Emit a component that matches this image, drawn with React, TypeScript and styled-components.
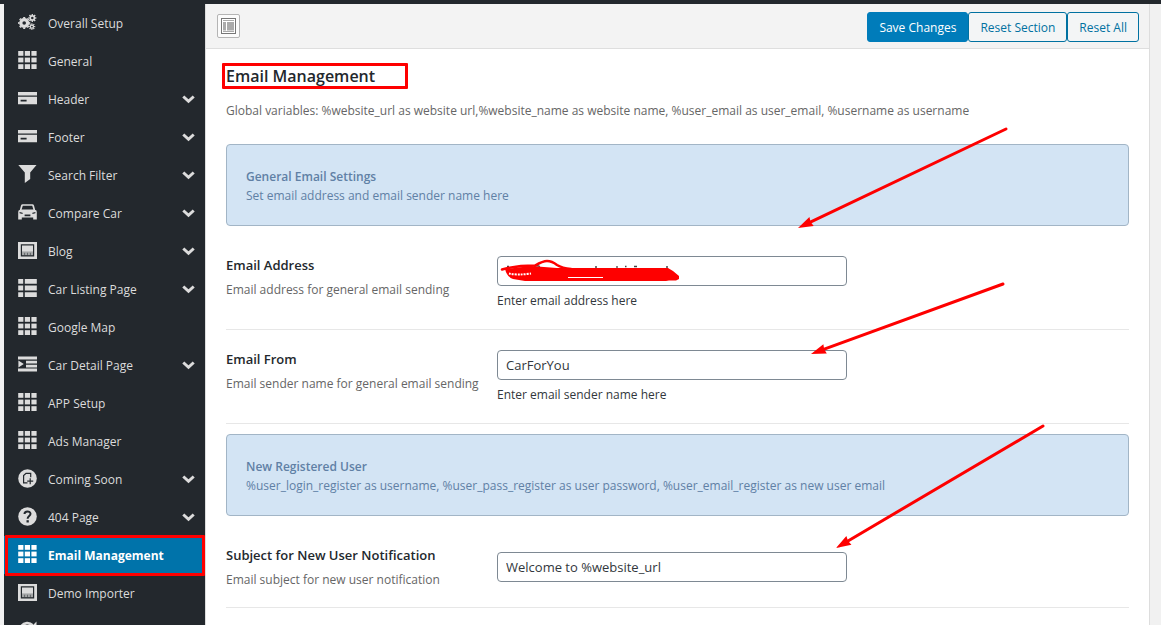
import React from "react";
import styled, { createGlobalStyle, css } from "styled-components";

const GlobalStyle = createGlobalStyle`
  *, *::before, *::after { box-sizing: border-box; }
  body {
    margin: 0;
    background: #f1f1f1;
    color: #32373c;
    font-family: "Open Sans", "Noto Sans", sans-serif;
    font-size: 12px;
    line-height: 18px;
  }
  h1, h2, h3, p, ul { margin: 0; padding: 0; }
  input, button { font: inherit; }
`;

const Page = styled.div`
  position: relative;
  display: flex;
  flex-direction: column;
  height: 100vh;
  overflow: hidden;
`;

const AdminBar = styled.div`
  flex: none;
  height: 4px;
  background: #23282d;
`;

const Frame = styled.div`
  flex: 1;
  min-height: 0;
  display: flex;
  padding: 0 11px 0 4px;
`;

const Sidebar = styled.nav`
  flex: none;
  width: 201px;
  background: #23282d;
`;

const MenuList = styled.ul`
  list-style: none;
`;

const MenuItem = styled.li`
  position: relative;
`;

const MenuLink = styled.a<{ $active?: boolean }>`
  display: flex;
  align-items: center;
  gap: 10px;
  height: 38px;
  padding: 0 10px 0 13px;
  color: #dcdcdc;
  text-decoration: none;
  ${({ $active }) =>
    $active &&
    css`
      background: #0073aa;
      color: #fff;
      font-weight: 700;
    `}
`;

const IconSlot = styled.span`
  flex: none;
  display: flex;
  justify-content: center;
  width: 20px;
  margin-right: 1px;
  padding-bottom: 2px;
`;

const MenuText = styled.span`
  flex: 1;
  padding-top: 2px;
`;

const Marker = styled.span`
  position: absolute;
  inset: -1px 0 -2px 1px;
  border: 3px solid #fe0000;
  border-radius: 1px;
  pointer-events: none;
`;

const Panel = styled.main`
  flex: 1;
  min-width: 0;
  background: #fff;
  border: solid #ddd;
  border-width: 0 1px;
`;

const Toolbar = styled.header`
  display: flex;
  align-items: center;
  justify-content: space-between;
  height: 45px;
  padding: 0 10px 0 11px;
  background: #f3f3f3;
  border-bottom: 1px solid #dedede;
`;

const ToggleButton = styled.button`
  display: flex;
  align-items: center;
  justify-content: center;
  width: 23px;
  height: 24px;
  padding: 0;
  background: #fbfbfb;
  border: 1px solid #b4b4b4;
  border-radius: 2px;
`;

const Actions = styled.div`
  display: flex;
  padding-top: 1px;
`;

const ActionButton = styled.button<{ $primary?: boolean }>`
  height: 30px;
  padding: 2px 11px 0;
  border: 1px solid ${({ $primary }) => ($primary ? "#007cba" : "#0071a1")};
  border-radius: 3px;
  background: ${({ $primary }) => ($primary ? "#007cba" : "#f3f5f6")};
  color: ${({ $primary }) => ($primary ? "#fff" : "#0071a1")};
`;

const Content = styled.div`
  padding: 14px 20px;
`;

const TitleFrame = styled.div`
  width: 186px;
  height: 26px;
  margin-left: -4px;
  padding-left: 1px;
  border: 3px solid #fe0000;
  border-radius: 1px;
`;

const Title = styled.h2`
  color: #23282d;
  font-size: 16px;
  font-weight: 600;
  line-height: 20px;
`;

const Intro = styled.p`
  padding: 13px 0 14px;
  color: #666;
`;

const Notice = styled.section`
  margin: 10px 0;
  padding: 22px 19px 20px;
  background: #d3e4f4;
  border: 1px solid #a2b5c6;
  border-radius: 4px;
  color: #6080a5;
  line-height: 19px;
`;

const NoticeTitle = styled.h3`
  font-size: 12px;
  font-weight: 600;
`;

const FieldRow = styled.div`
  display: grid;
  grid-template-columns: 271px minmax(0, 1fr);
  padding: 20px 0;
  border-bottom: 1px solid #e7e7e7;
`;

const FieldLabel = styled.label`
  display: block;
  margin-bottom: 7px;
  color: #23282d;
  font-size: 13px;
  font-weight: 600;
  line-height: 19px;
`;

const FieldNote = styled.p`
  color: #666;
  line-height: 15px;
`;

const FieldBody = styled.div`
  align-self: center;
`;

const InputWrap = styled.div`
  position: relative;
  max-width: 350px;
`;

const TextInput = styled.input`
  display: block;
  width: 100%;
  height: 30px;
  padding: 0 8px;
  background: #fff;
  border: 1px solid #7e8993;
  border-radius: 4px;
  color: #32373c;
  font-size: 13px;
`;

const Hint = styled.p`
  padding-top: 7px;
  line-height: 16px;
`;

const Scribble = styled.svg`
  position: absolute;
  top: 0;
  left: 0;
`;

const Arrows = styled.svg`
  position: absolute;
  top: 0;
  left: 0;
  pointer-events: none;
`;

type IconName =
  | "cogs" | "grid" | "card" | "filter" | "car" | "website"
  | "list" | "indent" | "soon" | "question" | "refresh";

const Svg = ({ h, children }: { h: number; children: React.ReactNode }) => (
  <svg width="19" height={h} viewBox={`0 0 19 ${h}`} fill="currentColor" aria-hidden="true">
    {children}
  </svg>
);

const Gear = ({ x, y, r, width }: { x: number; y: number; r: number; width: number }) => (
  <g transform={`translate(${x} ${y})`} fill="none" stroke="currentColor">
    <circle r={r} strokeWidth={width} />
    <circle
      r={r + width / 2 + 0.4}
      strokeWidth="1.4"
      pathLength="16"
      strokeDasharray="1 1"
      strokeDashoffset=".5"
    />
  </g>
);

const MenuIcon = ({ name }: { name: IconName }) => {
  switch (name) {
    case "cogs":
      return (
        <Svg h={16}>
          <Gear x={6.200} y={9} r={3.400} width={3.200} />
          <Gear x={14.300} y={4} r={2.100} width={1.700} />
          <Gear x={13.900} y={12.600} r={1.600} width={1.300} />
        </Svg>
      );
    case "grid":
      return (
        <Svg h={18}>
          {[0, 6.6, 13.2].map((y) =>
            [0.2, 6.8, 13.4].map((x) => <rect key={`${x}-${y}`} x={x} y={y} width="5.2" height="4.8" />)
          )}
        </Svg>
      );
    case "card":
      return (
        <Svg h={14}>
          <path fillRule="evenodd" d="M0 1h19v3.600H0zM0 5.700h19v7.600H0zM2.600 8.700v1.800h6V8.700z" />
        </Svg>
      );
    case "filter":
      return (
        <Svg h={18}>
          <path d="M.3 0h18.200l-6.300 7.600V14l-5.400 4V7.600z" />
        </Svg>
      );
    case "car":
      return (
        <Svg h={16}>
          <path
            fillRule="evenodd"
            d="M4.600.3h9.800c.8 0 1.300.4 1.600 1.200l1.200 4.500 1 .2c.4.500.6 1.200.6 2V15.500h-3.600V13.400H3.800v2.100H.2V8.200c0-.8.200-1.500.6-2l1-.2L3 1.500C3.300.700 3.800.3 4.600.3zM4.800 1.700L3.600 5.600h11.800l-1.200-3.900zM1.600 8v1.200l3 .7V8.700zM17.400 8l-3 .7v1.200l3-.7zM6.600 10.600v1.700h5.800v-1.700z"
          />
        </Svg>
      );
    case "website":
      return (
        <Svg h={17}>
          <path fillRule="evenodd" d="M0 0h19v17H0zM2.800 2.300v12.200h13.400V2.300z" />
          <path d="M4 3.500h11v6.300H4z" />
          <path
            d="M4 9.800h11v3.400H4z"
            opacity=".7"
          />
          <path d="M6.600 10.800v2.400M9.500 10.800v2.400M12.400 10.800v2.400" stroke="#23282d" strokeWidth=".5" />
        </Svg>
      );
    case "list":
      return (
        <Svg h={18}>
          {[0, 6.6, 13.2].map((y) => (
            <path key={y} d={`M.2 ${y}h5v4.800h-5zM6.800 ${y}h12v4.800h-12z`} />
          ))}
        </Svg>
      );
    case "indent":
      return (
        <Svg h={16}>
          <path d="M0 .6h19v2.800H0zM8 4.800h11v2.700H8zM8 8.700h11v2.700H8zM0 12.600h19v2.800H0zM.4 4.600l5.400 3.500L.4 11.600z" />
        </Svg>
      );
    case "soon":
      return (
        <Svg h={19}>
          <circle cx="9.500" cy="9.500" r="9.300" />
          <path
            d="M9.500 13.800H5.600V6.600l2.400-2.300h4.700v4M12.200 9.200v6M9.200 12.200h6"
            fill="none"
            stroke="#23282d"
            strokeWidth="1.200"
          />
        </Svg>
      );
    case "question":
      return (
        <Svg h={19}>
          <circle cx="9.500" cy="9.500" r="9.300" />
          <path
            d="M6.500 7c0-3.400 6-3.400 6-.2 0 2.200-2.900 2.200-2.900 5"
            fill="none"
            stroke="#23282d"
            strokeWidth="2"
          />
          <rect x="8.500" y="13.200" width="2.300" height="2.300" fill="#23282d" />
        </Svg>
      );
    case "refresh":
      return (
        <Svg h={19}>
          <path
            d="M16.200 12A7.300 7.300 0 1 1 14.500 4.300"
            fill="none"
            stroke="currentColor"
            strokeWidth="2.800"
          />
          <path d="M18.500.6v7.200h-7.200z" />
        </Svg>
      );
  }
};

const Chevron = () => (
  <svg width="13" height="9" viewBox="0 0 13 9" aria-hidden="true">
    <path d="M1.300 1.500L6.500 6.300l5.200-4.800" fill="none" stroke="currentColor" strokeWidth="3" />
  </svg>
);

const menu: { label: string; icon: IconName; expandable?: boolean; active?: boolean }[] = [
  { label: "Overall Setup", icon: "cogs" },
  { label: "General", icon: "grid" },
  { label: "Header", icon: "card", expandable: true },
  { label: "Footer", icon: "card", expandable: true },
  { label: "Search Filter", icon: "filter", expandable: true },
  { label: "Compare Car", icon: "car", expandable: true },
  { label: "Blog", icon: "website", expandable: true },
  { label: "Car Listing Page", icon: "list", expandable: true },
  { label: "Google Map", icon: "grid" },
  { label: "Car Detail Page", icon: "indent", expandable: true },
  { label: "APP Setup", icon: "grid" },
  { label: "Ads Manager", icon: "grid" },
  { label: "Coming Soon", icon: "soon", expandable: true },
  { label: "404 Page", icon: "question", expandable: true },
  { label: "Email Management", icon: "grid", active: true },
  { label: "Demo Importer", icon: "website" },
  { label: "", icon: "refresh" },
];

type FieldProps = {
  id: string;
  label: string;
  note: string;
  value: string;
  hint?: string;
  children?: React.ReactNode;
};

const Field = ({ id, label, note, value, hint, children }: FieldProps) => (
  <FieldRow>
    <div>
      <FieldLabel htmlFor={id}>{label}</FieldLabel>
      <FieldNote>{note}</FieldNote>
    </div>
    <FieldBody>
      <InputWrap>
        <TextInput id={id} type="text" defaultValue={value} />
        {children}
      </InputWrap>
      {hint && <Hint>{hint}</Hint>}
    </FieldBody>
  </FieldRow>
);

const Arrow = ({ from, to }: { from: [number, number]; to: [number, number] }) => {
  const angle = (Math.atan2(to[1] - from[1], to[0] - from[0]) * 180) / Math.PI;
  const length = Math.hypot(to[0] - from[0], to[1] - from[1]);
  return (
    <g transform={`translate(${from[0]} ${from[1]}) rotate(${angle})`} fill="#fe0000">
      <path d={`M0 0H${length - 9}`} stroke="#fe0000" strokeWidth="3" strokeLinecap="round" />
      <path d={`M${length} 0l-15 -5l1 5l-1 5z`} />
    </g>
  );
};

export default function App() {
  return (
    <Page>
      <GlobalStyle />
      <AdminBar />
      <Frame>
        <Sidebar aria-label="Theme options">
          <MenuList>
            {menu.map((item) => (
              <MenuItem key={item.label}>
                <MenuLink href="#" $active={item.active}>
                  <IconSlot>
                    <MenuIcon name={item.icon} />
                  </IconSlot>
                  <MenuText>{item.label}</MenuText>
                  {item.expandable && <Chevron />}
                </MenuLink>
                {item.active && <Marker />}
              </MenuItem>
            ))}
          </MenuList>
        </Sidebar>
        <Panel>
          <Toolbar>
            <ToggleButton type="button" aria-label="Expand options">
              <svg width="15" height="16" viewBox="0 0 15 16" aria-hidden="true">
                <rect x=".5" y=".5" width="14" height="15" fill="#fff" stroke="#777" />
                <path d="M2 2.500h11M2 13.500h11" stroke="#aaa" />
                <path d="M2 4h3v8.500H2zM6 4h7v8.500H6z" fill="#aaa" />
              </svg>
            </ToggleButton>
            <Actions>
              <ActionButton type="button" $primary>Save Changes</ActionButton>
              <ActionButton type="button">Reset Section</ActionButton>
              <ActionButton type="button">Reset All</ActionButton>
            </Actions>
          </Toolbar>
          <Content>
            <TitleFrame>
              <Title>Email Management</Title>
            </TitleFrame>
            <Intro>
              Global variables: %website_url as website url,%website_name as website name, %user_email as
              user_email, %username as username
            </Intro>
            <Notice>
              <NoticeTitle>General Email Settings</NoticeTitle>
              <p>Set email address and email sender name here</p>
            </Notice>
            <Field
              id="email-address"
              label="Email Address"
              note="Email address for general email sending"
              value=""
              hint="Enter email address here"
            >
              <Scribble width="190" height="30" viewBox="0 0 190 30" fill="none" aria-hidden="true">
                <path
                  d="M10 10.500h2M37 10.500q3-1.500 6 0M98 11h2M120 10v2M128 10.500h1.500M137 10.500h3M169 11h2"
                  stroke="#444"
                  strokeWidth="1.300"
                />
                <path
                  d="M8 13L34 10L60 12H171l5 3 6 5v3l-3 1.500h-7l-3 .5H28l-12-2q-6-2-8-10z"
                  fill="#fe0000"
                />
                <path
                  d="M5 13.500q14-4 33-4q8-4.500 12-4.500q5 0 10 4q5 3 14 4"
                  stroke="#fe0000"
                  strokeWidth="2.500"
                  strokeLinecap="round"
                  strokeLinejoin="round"
                />
                <path d="M12 17.500q8 2 22 0" stroke="#fff" strokeWidth="2" strokeDasharray="2 1" />
                <path d="M71 21.500h35" stroke="#fff" strokeWidth="1" />
              </Scribble>
            </Field>
            <Field
              id="email-from"
              label="Email From"
              note="Email sender name for general email sending"
              value="CarForYou"
              hint="Enter email sender name here"
            />
            <Notice>
              <NoticeTitle>New Registered User</NoticeTitle>
              <p>
                %user_login_register as username, %user_pass_register as user password,
                %user_email_register as new user email
              </p>
            </Notice>
            <Field
              id="new-user-subject"
              label="Subject for New User Notification"
              note="Email subject for new user notification"
              value="Welcome to %website_url"
            />
          </Content>
        </Panel>
      </Frame>
      <Arrows width="1161" height="625" viewBox="0 0 1161 625" aria-hidden="true">
        <Arrow from={[1006, 129]} to={[798, 228]} />
        <Arrow from={[1003, 284]} to={[811, 354]} />
        <Arrow from={[1043, 426]} to={[836, 548]} />
      </Arrows>
    </Page>
  );
}
